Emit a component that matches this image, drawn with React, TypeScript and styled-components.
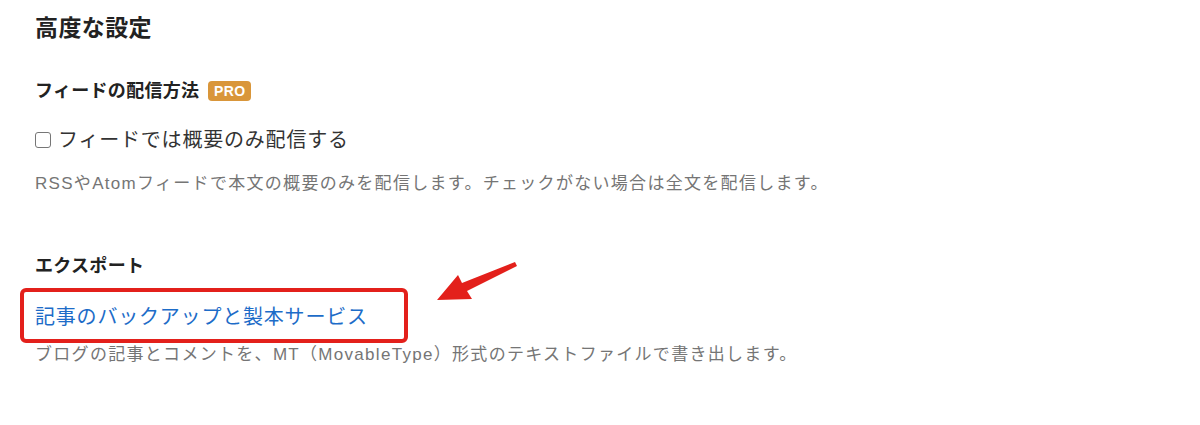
import React from 'react';
import styled, { createGlobalStyle } from 'styled-components';

const GlobalStyle = createGlobalStyle`
  body {
    margin: 0;
    background: #fff;
    font-family: 'Liberation Sans', 'Noto Sans CJK JP', sans-serif;
    color: #222;
  }
`;

const Page = styled.div`
  position: relative;
  display: flex;
  flex-direction: column;
  align-items: flex-start;
  width: 1200px;
  height: 425px;
  box-sizing: border-box;
  padding: 12px 35px;
`;

const Title = styled.h1`
  margin: 0;
  font-size: 23px;
  line-height: 32px;
  font-weight: 700;
  letter-spacing: 0.4px;
  color: #222;
`;

const SectionTitle = styled.h2<{ $top: number }>`
  display: flex;
  align-items: center;
  gap: 9px;
  margin: ${(p) => p.$top}px 0 0;
  font-size: 18px;
  line-height: 24px;
  font-weight: 700;
  letter-spacing: 0.3px;
  color: #222;
`;

const ProBadge = styled.span`
  display: inline-flex;
  align-items: center;
  justify-content: center;
  width: 43px;
  height: 20px;
  border-radius: 4px;
  background: #d9963a;
  color: #fff;
  font-size: 14px;
  font-weight: 700;
  letter-spacing: 0.5px;
`;

const CheckRow = styled.label`
  display: flex;
  align-items: center;
  margin-top: 23px;
  font-size: 20px;
  line-height: 28px;
  letter-spacing: 0.8px;
  color: #333;
`;

const CheckBox = styled.input`
  appearance: none;
  width: 16px;
  height: 16px;
  margin: 0 7px 0 0;
  border: 1px solid #767676;
  border-radius: 3px;
  background: #fff;
`;

const Note = styled.p<{ $top: number }>`
  margin: ${(p) => p.$top}px 0 0;
  font-size: 17px;
  line-height: 24px;
  letter-spacing: 1.3px;
  color: #757575;
`;

const HighlightBox = styled.div`
  box-sizing: border-box;
  width: 388px;
  height: 55px;
  margin: 10px 0 0 -15px;
  padding-left: 11px;
  display: flex;
  align-items: center;
  border: 4px solid #e3201b;
  border-radius: 6px;
`;

const ServiceLink = styled.a`
  font-size: 20px;
  letter-spacing: 0.8px;
  color: #1d6cc8;
  text-decoration: none;
`;

const Arrow = styled.svg`
  position: absolute;
  left: 430px;
  top: 255px;
`;

const App: React.FC = () => {
  return (
    <Page>
      <GlobalStyle />
      <Title>高度な設定</Title>

      <SectionTitle $top={35}>
        フィードの配信方法
        <ProBadge>PRO</ProBadge>
      </SectionTitle>
      <CheckRow>
        <CheckBox type="checkbox" />
        フィードでは概要のみ配信する
      </CheckRow>
      <Note $top={18}>
        RSSやAtomフィードで本文の概要のみを配信します。チェックがない場合は全文を配信します。
      </Note>

      <SectionTitle $top={58}>エクスポート</SectionTitle>
      <HighlightBox>
        <ServiceLink href="#">記事のバックアップと製本サービス</ServiceLink>
      </HighlightBox>
      <Note $top={0}>
        ブログの記事とコメントを、MT（MovableType）形式のテキストファイルで書き出します。
      </Note>

      <Arrow width="95" height="55" viewBox="430 255 95 55">
        <polygon
          points="437,300 458,275 462,283 515,262 517,266 467,291 472,299"
          fill="#e3201b"
        />
      </Arrow>
    </Page>
  );
};

export default App;
